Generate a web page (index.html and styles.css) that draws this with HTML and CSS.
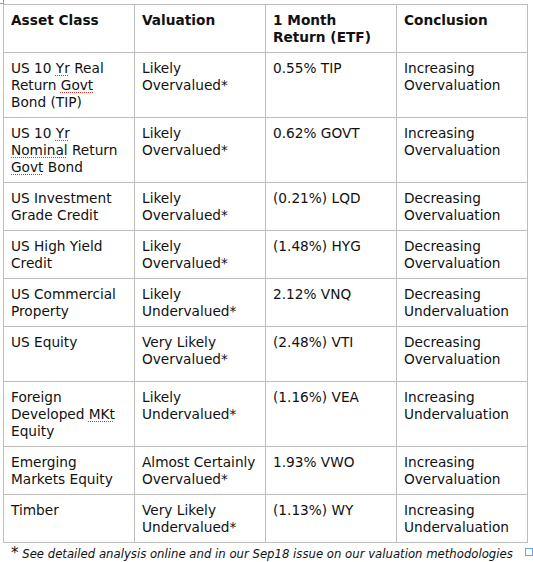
FILE: index.html
```html
<!DOCTYPE html>
<html>
<head>
<meta charset="utf-8">
<link rel="stylesheet" href="styles.css">
</head>
<body>
<span class="handle handle-tl"></span>
<div class="wrap">
<table class="grid">
  <colgroup><col class="c"><col class="c"><col class="c"><col class="c"></colgroup>
  <tr class="head">
    <th>Asset Class</th><th>Valuation</th><th>1 Month Return (ETF)</th><th>Conclusion</th>
  </tr>
  <tr>
    <td>US 10 <span class="sp">Yr</span> Real Return <span class="sp">Govt</span> Bond (TIP)</td>
    <td>Likely Overvalued*</td><td>0.55% TIP</td><td>Increasing Overvaluation</td>
  </tr>
  <tr>
    <td>US 10 <span class="sp g">Yr</span> <span class="sp g">Nominal</span> Return <span class="sp">Govt</span> Bond</td>
    <td>Likely Overvalued*</td><td>0.62% GOVT</td><td>Increasing Overvaluation</td>
  </tr>
  <tr>
    <td>US Investment Grade Credit</td>
    <td>Likely Overvalued*</td><td>(0.21%) LQD</td><td>Decreasing Overvaluation</td>
  </tr>
  <tr>
    <td>US High Yield Credit</td>
    <td>Likely Overvalued*</td><td>(1.48%) HYG</td><td>Decreasing Overvaluation</td>
  </tr>
  <tr>
    <td>US Commercial Property</td>
    <td>Likely Undervalued*</td><td>2.12% VNQ</td><td>Decreasing Undervaluation</td>
  </tr>
  <tr class="tall">
    <td>US Equity</td>
    <td>Very Likely Overvalued*</td><td>(2.48%) VTI</td><td>Decreasing Overvaluation</td>
  </tr>
  <tr>
    <td>Foreign Developed <span class="sp">MKt</span> Equity</td>
    <td>Likely Undervalued*</td><td>(1.16%) VEA</td><td>Increasing Undervaluation</td>
  </tr>
  <tr>
    <td>Emerging Markets Equity</td>
    <td>Almost Certainly Overvalued*</td><td>1.93% VWO</td><td>Increasing Overvaluation</td>
  </tr>
  <tr class="short">
    <td>Timber</td>
    <td>Very Likely Undervalued*</td><td>(1.13%) WY</td><td>Increasing Undervaluation</td>
  </tr>
</table>
<p class="note"><span class="star">*</span> <em>See detailed analysis online and in our Sep18 issue on our valuation methodologies</em></p>
</div>
<span class="handle handle-br"></span>
</body>
</html>
```

FILE: styles.css
```css
html, body {
  margin: 0;
  padding: 0;
  background: #fff;
}
body {
  position: relative;
  width: 533px;
  height: 562px;
  overflow: hidden;
  font-family: "DejaVu Sans", Verdana, sans-serif;
  color: #111;
}
.wrap {
  padding: 4px 0 0 3px;
}
.grid {
  border-collapse: collapse;
  table-layout: fixed;
  width: 525px;
  font-size: 13.7px;
  line-height: 17px;
}
.c {
  width: 131px;
}
.grid th,
.grid td {
  border: 1px solid #bdbdbd;
  padding: 7px 7px 6px 7px;
  text-align: left;
  vertical-align: top;
  font-weight: normal;
}
.grid th {
  font-weight: bold;
}
.grid tr.head th {
  height: 34px;
}
.grid tr.tall td {
  height: 41px;
}
.grid tr.short td {
  height: 32px;
}
.sp {
  text-decoration-line: underline;
  text-decoration-style: dotted;
  text-decoration-color: #d9342b;
  text-decoration-thickness: 1px;
  text-underline-offset: 2px;
}
.sp.g {
  text-decoration-color: #2a9d3a;
}
.note {
  margin: 3px 0 0 8px;
  font-size: 11.7px;
  line-height: 14px;
  white-space: nowrap;
}
.star {
  font-size: 15px;
  font-style: normal;
}
.note em {
  font-style: italic;
}
.handle {
  position: absolute;
  width: 6px;
  height: 6px;
  border: 1px solid #6aa2e8;
}
.handle-tl {
  left: -4px;
  top: -4px;
}
.handle-br {
  left: 525px;
  top: 548px;
}
```
